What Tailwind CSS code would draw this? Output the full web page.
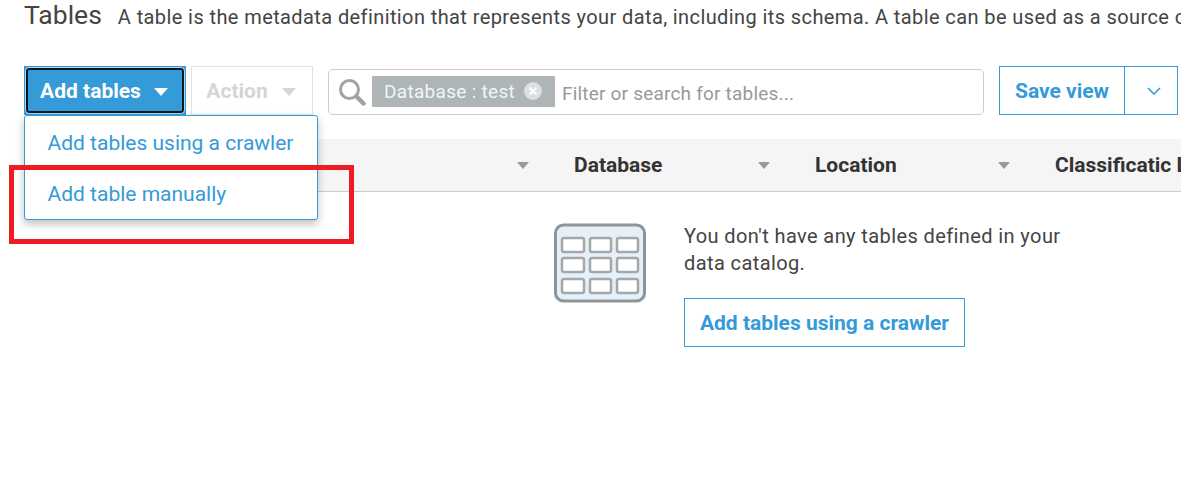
<!DOCTYPE html>
<html>
<head>
<meta charset="utf-8">
<script src="https://cdn.jsdelivr.net/npm/@tailwindcss/browser@4"></script>
</head>
<body class="bg-white overflow-hidden font-['Roboto',sans-serif] text-[#444]">
<div class="relative w-[1181px] h-[503px] overflow-hidden">
  <div class="flex items-baseline h-[66px] pl-6 whitespace-nowrap -mt-[2px]">
    <span class="text-[26.5px] leading-[34px] text-[#444]">Tables</span>
    <span class="ml-[16px] text-[20px] tracking-[0.4px] text-[#444]">A table is the metadata definition that represents your data, including its schema. A table can be used as a source or target in a job definition.</span>
  </div>
  <div class="flex items-start pl-6 mt-[2px] h-[73px]">
    <button class="w-[162px] h-[49px] bg-[#359ad8] p-[2px] flex">
      <span class="flex-1 flex items-center justify-center gap-[13px] border-2 border-[#10181d] rounded-[3px] text-white font-bold text-[21px] outline outline-1 outline-white/60 pt-[2px] pr-[2px]">
        Add tables
        <svg width="14" height="8" viewBox="0 0 14 8"><path d="M0 0h14L7 8z" fill="#fff"/></svg>
      </span>
    </button>
    <button class="ml-[5px] w-[122px] h-[49px] border border-[#e2e2e2] flex items-center justify-center gap-[14px] text-[#d5d5d5] font-bold text-[21px] pt-[2px] pr-[2px]">
      Action
      <svg width="14" height="8" viewBox="0 0 14 8"><path d="M0 0h14L7 8z" fill="#d5d5d5"/></svg>
    </button>
    <div class="ml-[15px] mt-[3px] w-[656px] h-[46px] border border-[#ccc] rounded-[5px] flex items-center pl-[9px]">
      <svg width="28" height="28" viewBox="0 0 28 28" fill="none"><circle cx="11.5" cy="11.5" r="9" stroke="#a3a3a3" stroke-width="3"/><path d="M18.5 18.5l7 7" stroke="#a3a3a3" stroke-width="4.5" stroke-linecap="round"/></svg>
      <span class="ml-[6px] h-[31px] w-[183px] bg-[#aeb5b6] rounded-[1px] flex items-center pl-[12px] pt-[2px] text-[19px] tracking-[0.3px] text-[#f3f4f4] -mt-[2px]">
        Database : test
        <svg class="ml-[9px] -mt-[2px]" width="18" height="18" viewBox="0 0 18 18"><circle cx="9" cy="9" r="9" fill="#dcdfdf"/><path d="M5.5 5.5l7 7M12.5 5.5l-7 7" stroke="#fff" stroke-width="2"/></svg>
      </span>
      <span class="ml-[7px] mt-[4px] text-[19px] text-[#999] tracking-[0.2px]">Filter or search for tables...</span>
    </div>
    <div class="ml-[15px] w-[179px] h-[49px] border border-[#359ad8] flex text-[#359ad8]">
      <span class="w-[125px] border-r border-[#359ad8] flex items-center justify-center font-bold text-[21px] pt-[2px]">Save view</span>
      <span class="flex-1 flex items-center justify-center pl-[6px]">
        <svg width="14" height="8" viewBox="0 0 14 8" fill="none"><path d="M1 1l6 6 6-6" stroke="#359ad8" stroke-width="1.6"/></svg>
      </span>
    </div>
  </div>
  <div class="ml-6 h-[53px] bg-[#f5f5f5] border-b border-[#ccc] flex items-center font-bold text-[21px] text-[#333] whitespace-nowrap overflow-hidden">
    <span class="ml-[493px] shrink-0"><svg width="12" height="7" viewBox="0 0 12 7"><path d="M0 0h12L6 7z" fill="#999"/></svg></span>
    <span class="ml-[45px] w-[184px] shrink-0 pt-[2px]">Database</span>
    <span class="shrink-0"><svg width="12" height="7" viewBox="0 0 12 7"><path d="M0 0h12L6 7z" fill="#999"/></svg></span>
    <span class="ml-[45px] w-[183px] shrink-0 pt-[2px]">Location</span>
    <span class="shrink-0"><svg width="12" height="7" viewBox="0 0 12 7"><path d="M0 0h12L6 7z" fill="#999"/></svg></span>
    <span class="ml-[45px] shrink-0 pt-[2px]">Classificatic L</span>
  </div>
  <div class="flex pl-[554px] pt-[31px]">
    <svg class="blur-[0.6px]" width="92" height="82" viewBox="0 0 92 82" fill="none">
      <rect x="1.5" y="2" width="89" height="76" rx="8" fill="#e6f0f9" stroke="#8f9699" stroke-width="3"/>
      <g fill="#fff" stroke="#a3a8aa" stroke-width="2.5">
        <rect x="8" y="15" width="22" height="14" rx="2"/><rect x="36" y="15" width="21" height="14" rx="2"/><rect x="63" y="15" width="21" height="14" rx="2"/>
        <rect x="8" y="35" width="22" height="14" rx="2"/><rect x="36" y="35" width="21" height="14" rx="2"/><rect x="63" y="35" width="21" height="14" rx="2"/>
        <rect x="8" y="56" width="22" height="14" rx="2"/><rect x="36" y="56" width="21" height="14" rx="2"/><rect x="63" y="56" width="21" height="14" rx="2"/>
      </g>
    </svg>
    <div class="ml-[38px]">
      <p class="text-[20px] tracking-[0.4px] leading-[27px] text-[#444] w-[400px]">You don't have any tables defined in your data catalog.</p>
      <button class="mt-[21px] w-[281px] h-[49px] border border-[#359ad8] text-[#359ad8] font-bold text-[21px] pt-[2px]">Add tables using a crawler</button>
    </div>
  </div>

  <div class="absolute left-6 top-[115px] w-[294px] h-[105px] bg-white border border-[#359ad8] rounded-[3px] shadow-[0_4px_8px_rgba(0,0,0,0.25)] text-[#359ad8] text-[21px] pl-[22.5px]">
    <div class="h-[53px] flex items-center pt-[2px]">Add tables using a crawler</div>
    <div class="h-[50px] flex items-center pt-[2px]">Add table manually</div>
  </div>
  <div class="absolute left-[9px] top-[165px] w-[345px] h-[79px] border-[5px] border-[#ed1c24]"></div>
</div>
</body>
</html>
